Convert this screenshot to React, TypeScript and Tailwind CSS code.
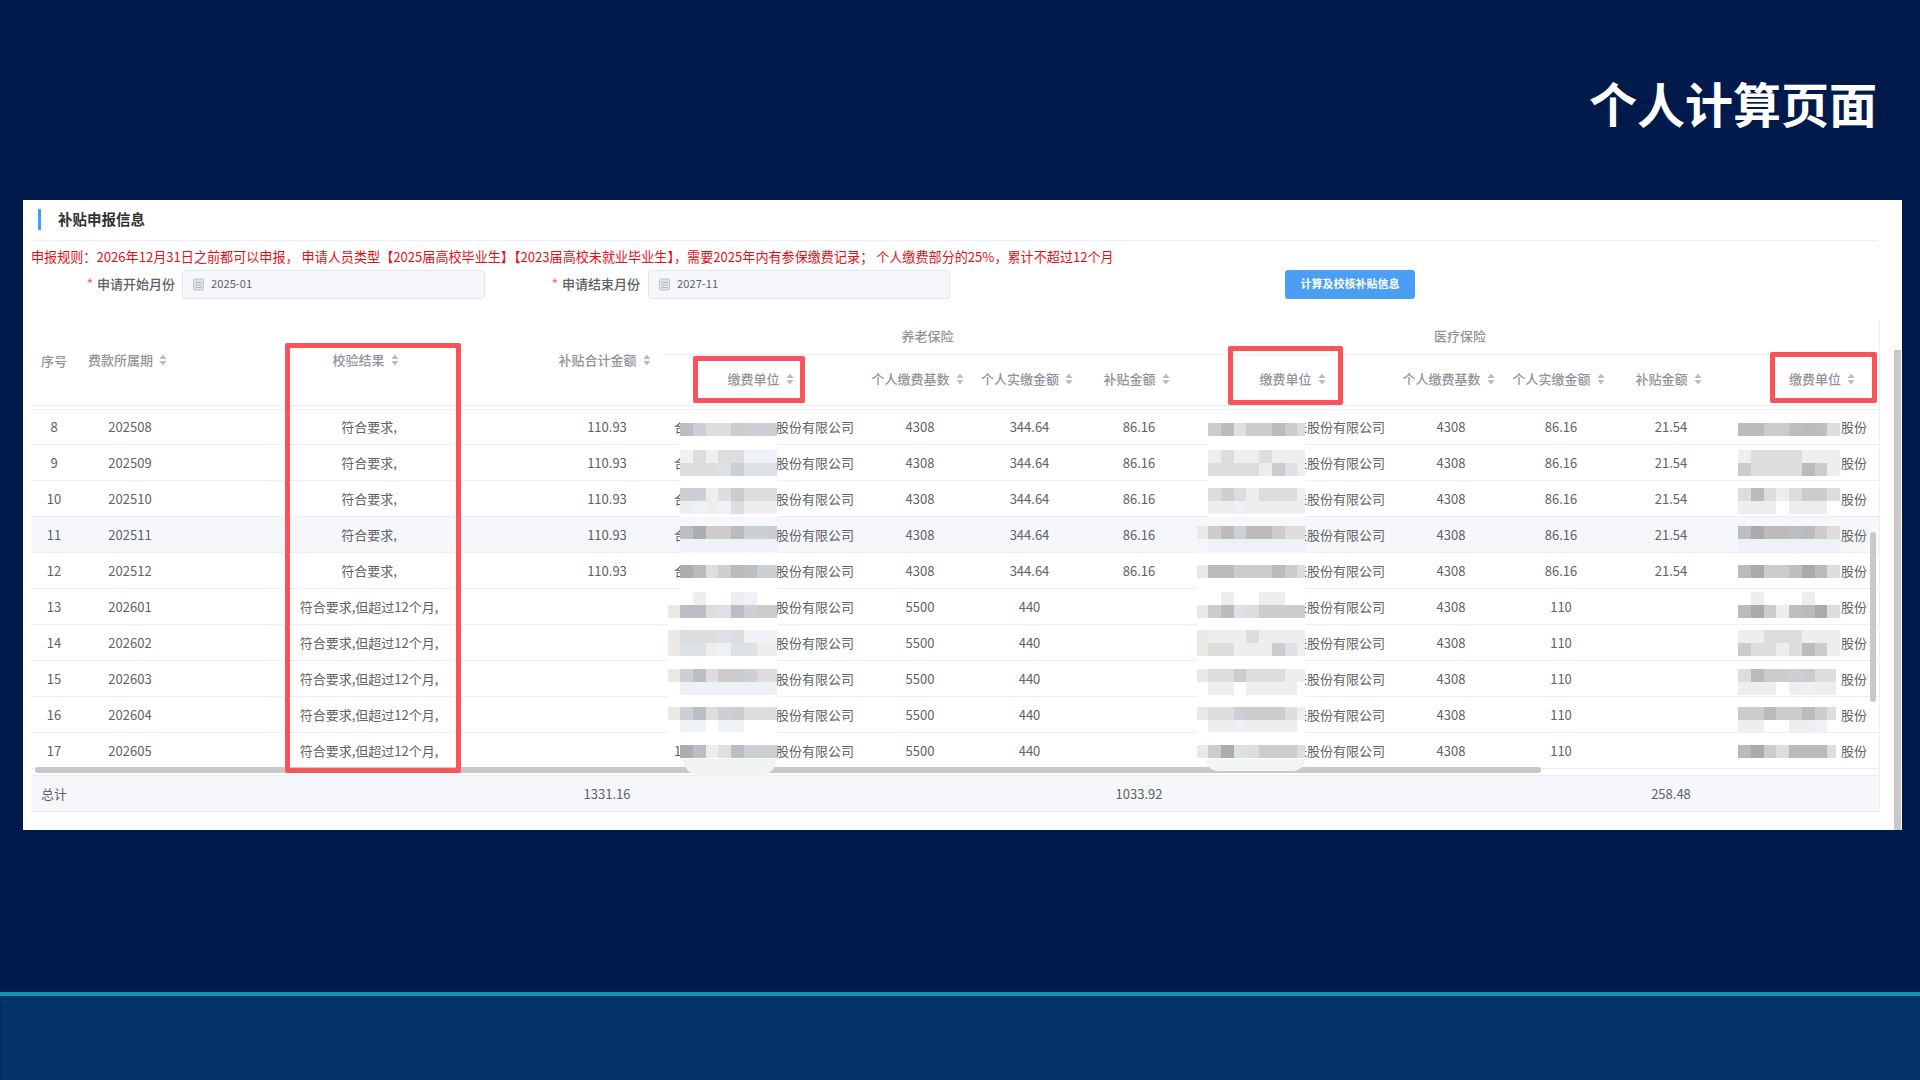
import React from "react";

const GRID =
  "grid grid-cols-[46px_106px_370px_108px_204px_110px_109px_110px_202px_110px_110px_110px_141px]";

function Sort() {
  return (
    <svg width="8" height="12" viewBox="0 0 8 12" className="ml-[6px] flex-none" fill="#b8bcc4">
      <path d="M4 0.5 L7.5 5 L0.5 5 Z" />
      <path d="M4 11.5 L0.5 7 L7.5 7 Z" />
    </svg>
  );
}

function Head({ label, className = "" }: { label: string; className?: string }) {
  return (
    <div className={`flex items-center justify-center text-[13px] font-medium text-[#909399] ${className}`}>
      <span className="whitespace-nowrap">{label}</span>
      <Sort />
    </div>
  );
}

function CalendarIcon() {
  return (
    <svg width="11" height="13" viewBox="0 0 11 13" className="flex-none" fill="none">
      <rect x="0.5" y="1" width="10" height="11" rx="1" fill="#dfe2e8" stroke="#c0c4cc" />
      <path d="M2.5 4.5h6M2.5 7h6M2.5 9.5h6" stroke="#b4b8c0" />
    </svg>
  );
}

function DateField({ value, className }: { value: string; className: string }) {
  return (
    <div className={`flex h-[29px] items-center rounded-[3px] border border-[#e4e7ed] bg-[#f5f7fa] pl-[10px] text-[11.2px] text-[#606266] ${className}`}>
      <CalendarIcon />
      <span className="ml-[7px] -translate-y-px">{value}</span>
    </div>
  );
}

type Strip = [string, string];
const F = "fff fff fff fff fff fff fff fff";
const L = "f5f7fa f5f7fa f5f7fa f5f7fa f5f7fa f5f7fa f5f7fa f5f7fa";

const COL1: Strip[] = [
  ["bbc ccd ddd ddd cbc cdd ccd ccd", F],
  ["eef ddd eee ddd ddd eef eef eef", "ddd ddd ddd dde ccd dde dde dde"],
  ["ccd ccd eee ddd ccc ddd ddd ddd", "eee eef eee eef ddd eee eee eee"],
  ["bbc aab ccc ccc bbb ccd ccd ccc", "eef eef eef eef eef eef eef eef"],
  ["aab bbb ddd ccd bbb bbc ccd ccd", F],
  ["fff eee fff fff eee eef fff fff", "bbc bbc ddd dde bbc ccd ccc ccc"],
  ["ddd ddd ddd dde ddd eef eef eef", "dde dde eee eef dde dde eee eee"],
  ["ccd bbc ddd ccc ccc ccd ddd ddd", "eef eef eef eef eef eef eef eef"],
  ["ccd bbc ddd ccd ccc ddd ddd ddd", "eef eef fff eef eef fff fff fff"],
  [F, "aab bbc eee dde bbc ccd ccd ccd"],
];
const COL2: Strip[] = [
  ["ccc bbb dde ccc ccc bbb ccc ddd", F],
  ["eee ddd eee eee ddd eee eee eee", "ddd ddd ddd ddd eee ccc dde eee"],
  ["ddd ccd ddd eee ddd ddd ddd eee", "eee eee eef eee eee eee eee eee"],
  ["ccc bbb ccd bbb bbb ccc ddd ddd", "eef eef eef eef eef eef eef eef"],
  ["bbb bbb ccc ccc ccc bbb ccc ddd", F],
  ["fff eee fff fff eee eee fff fff", "ccc bbb dde ddd ccc ccc ccc ccc"],
  ["eee eee eee ddd eee eee eee eee", "ddd ddd eee eee eee ccc dde eee"],
  ["ddd ddd ccc ddd ddd ddd eee eee", "eee eee fff eee eee eee eee fff"],
  ["ddd ddd ccd ccc ccc ccc ddd eee", "eee eee eef eee eee eee eee fff"],
  [F, "ccc aab dde ddd ccc ccc ccc ddd"],
];
const COL3: Strip[] = [
  ["bbb bbb ccc ccc bbc bbb bbc ddd", F],
  ["eee ddd ddd ddd ddd eee eee eee", "ccc ddd ddd ddd ddd bbb ccc eee"],
  ["ddd bbb ddd eee ddd ccc ccc ddd", "eee eee eee fff eee eee eee fff"],
  ["bbc aaa bbb bbb bbc bbb ccc ddd", "eef eef eef eef eef eef eef eef"],
  ["bbb aaa ccc ccc bbc aaa bbb ddd", F],
  ["fff eee fff fff fff eee fff fff", "bbb aaa ccc eee bbc bbb aaa ddd"],
  ["eee eee ddd ddd ddd eee eee eee", "ccc ddd ddd eee ddd bbb ccc eee"],
  ["ddd bbb ccc ccc ccd ccc ddd ddd", "eee eee eee fff eee eef eee eee"],
  ["ccc ccc bbb ccc ccc bbb ccc ddd", "eee eee fff fff eee eee eef fff"],
  [F, "bbb aaa ccc ddd bbb bbb bbb ddd"],
];
const OFFSETS = [13, 5, 7, 9, 12, 3, 5, 8, 10, -1];

// "bbc" style codes are a grey with a slight blue cast; keep the cast faint.
function tone(c: string) {
  if (c.length !== 3) return `#${c}`;
  const a = parseInt(c[0], 16) * 17;
  const cool = c[2] !== c[0];
  return cool ? `rgb(${a},${a + 4},${a + 9})` : `rgb(${a},${a},${a})`;
}

function StripRow({ colors, width }: { colors: string; width: number }) {
  const list = colors.split(" ");
  return (
    <div className="flex h-[13px] overflow-hidden" style={{ width }}>
      {list.map((c, i) => (
        <div key={i} className="h-full w-[12.75px] flex-none" style={{ background: tone(c) }} />
      ))}
    </div>
  );
}

function Mosaic({
  strip,
  row,
  left,
  width,
  washLeft,
  hi,
}: {
  strip: Strip;
  row: number;
  left: number;
  width: number;
  washLeft: number;
  hi: boolean;
}) {
  const top = OFFSETS[row];
  const hasLead = washLeft < left;
  const leadTop = top + (row === 5 || row === 9 ? 13 : 0);
  const leadH = row === 6 ? 26 : 13;
  return (
    <div
      className={`absolute top-0 -bottom-px ${hi ? "bg-[#f5f7fa]" : "bg-white"}`}
      style={{ left: washLeft, width: left + width - washLeft }}
    >
      {hasLead && (
        <div className="absolute left-0 bg-[#ece9e5]" style={{ top: leadTop, height: leadH, width: left - washLeft }} />
      )}
      <div className="absolute" style={{ top, left: left - washLeft }}>
        <StripRow colors={strip[0]} width={width} />
        <StripRow colors={hi && strip[1] === F ? L : strip[1]} width={width} />
      </div>
    </div>
  );
}

const ROWS = [
  [8, "202508"],
  [9, "202509"],
  [10, "202510"],
  [11, "202511"],
  [12, "202512"],
  [13, "202601"],
  [14, "202602"],
  [15, "202603"],
  [16, "202604"],
  [17, "202605"],
] as const;

function Num({ children }: { children?: React.ReactNode }) {
  return <div className="flex items-center justify-center">{children}</div>;
}

function Row({ index }: { index: number }) {
  const [no, period] = ROWS[index];
  const ok = index < 5;
  const hi = index === 3;
  const leak = index < 5 || index === 9;
  const lead = index >= 5 && index < 9;
  return (
    <div
      className={`${GRID} border-b border-[#ebeef5] text-[13px] text-[#606266] ${index === 0 ? "h-[35px]" : "h-[36px]"} ${hi ? "bg-[#f5f7fa]" : ""}`}
    >
      <Num>{no}</Num>
      <Num>{period}</Num>
      <div className="flex items-center justify-center pl-[2px]">
        {ok ? "符合要求," : "符合要求,但超过12个月,"}
      </div>
      <Num>{ok ? "110.93" : ""}</Num>

      <div className="relative flex items-center justify-end pr-[11px] whitespace-nowrap">
        股份有限公司
        {leak && <span className="absolute left-[13px]">{index === 9 ? "1" : "合"}</span>}
        <Mosaic strip={COL1[index]} row={index} left={19} width={97} washLeft={lead ? 7 : 19} hi={hi} />
        {index === 9 && (
          <div className="absolute left-[22px] top-[26px] z-10 h-[16px] w-[94px] rounded-b-[18px] bg-[#f2f2f2]" />
        )}
      </div>
      <Num>{ok ? "4308" : "5500"}</Num>
      <Num>{ok ? "344.64" : "440"}</Num>
      <Num>{ok ? "86.16" : ""}</Num>

      <div className="relative flex items-center justify-end pr-[11px] whitespace-nowrap">
        未股份有限公司
        <Mosaic strip={COL2[index]} row={index} left={14} width={97} washLeft={index > 2 ? 3 : 14} hi={hi} />
        {index === 9 && (
          <div className="absolute left-[12px] top-[26px] z-10 h-[12px] w-[99px] rounded-b-[18px] bg-[#f4f4f4]" />
        )}
      </div>
      <Num>4308</Num>
      <Num>{ok ? "86.16" : "110"}</Num>
      <Num>{ok ? "21.54" : ""}</Num>

      <div className="relative flex items-center overflow-hidden pl-[115px] whitespace-nowrap">
        股份有限公司
        <Mosaic strip={COL3[index]} row={index} left={12} width={index >= 7 ? 98 : 102} washLeft={12} hi={hi} />
      </div>
    </div>
  );
}

function RedBox({ className }: { className: string }) {
  return <div className={`absolute z-20 rounded-[2px] border-[5px] border-[#f9525a] ${className}`} />;
}

export default function App() {
  return (
    <div className="flex h-[1080px] w-[1920px] flex-col overflow-hidden bg-[#001a4b] font-['Noto_Sans_CJK_SC','Noto_Sans',sans-serif]">
      <div className="flex h-[200px] flex-none justify-end pr-[43px] pt-[68px]">
        <h1 className="text-[48px] leading-[68px] font-bold text-white">个人计算页面</h1>
      </div>

      <div className="relative ml-[23px] h-[630px] w-[1879px] flex-none bg-white">
        <div className="ml-[15px] flex h-[30px] items-start pt-[9px]">
          <div className="h-[21px] w-[3px] bg-[#409eff]" />
          <div className="ml-[17px] text-[14.5px] leading-[19px] font-bold text-[#303133]">补贴申报信息</div>
        </div>
        <div className="ml-[10px] mt-[10px] h-px w-[1845px] bg-[#ebeef5]" />
        <div className="ml-[8px] mt-[6px] h-[20px] whitespace-pre text-[13.1px] leading-[20px] text-[#e60f18]">
          申报规则：2026年12月31日之前都可以申报， 申请人员类型【2025届高校毕业生】【2023届高校未就业毕业生】，需要2025年内有参保缴费记录； 个人缴费部分的25%，累计不超过12个月
        </div>

        <div className="mt-[3px] flex h-[29px] items-center text-[13px] text-[#606266]">
          <div className="w-[152px] -translate-y-px text-right font-medium">
            <span className="mr-[4px] text-[#f56c6c]">*</span>申请开始月份
          </div>
          <DateField value="2025-01" className="ml-[7px] w-[303px]" />
          <div className="w-[155px] -translate-y-px text-right font-medium">
            <span className="mr-[4px] text-[#f56c6c]">*</span>申请结束月份
          </div>
          <DateField value="2027-11" className="ml-[8px] w-[302px]" />
          <button className="ml-[335px] flex h-[29px] w-[130px] items-center justify-center rounded-[3px] bg-[#4a9ff5] pb-[2px] text-[11px] font-bold text-white">
            计算及校核补贴信息
          </button>
        </div>

        <div className="ml-[8px] mt-[21px] w-[1849px] border-r border-[#ebeef5]">
          <div className={`${GRID} h-[86px] grid-rows-[35px_50px] border-b border-[#ebeef5]`}>
            <div className="row-span-2 flex -translate-y-[2px] items-center justify-center text-[13px] font-medium text-[#909399]">序号</div>
            <Head label="费款所属期" className="row-span-2 -translate-y-[3px] pr-[5px]" />
            <Head label="校验结果" className="row-span-2 -translate-y-[3px] pr-[5px]" />
            <Head label="补贴合计金额" className="row-span-2 -translate-y-[3px] pr-[5px]" />
            <div className="col-span-4 flex items-center justify-center border-b border-[#ebeef5] pb-[2px] text-[13px] font-medium text-[#909399]">养老保险</div>
            <div className="col-span-4 flex items-center justify-center border-b border-[#ebeef5] pb-[2px] text-[13px] font-medium text-[#909399]">医疗保险</div>
            <div className="border-b border-[#ebeef5]" />
            <Head label="缴费单位" className="-translate-y-px pr-[5px]" />
            <Head label="个人缴费基数" className="-translate-y-px pr-[5px]" />
            <Head label="个人实缴金额" className="-translate-y-px pr-[5px]" />
            <Head label="补贴金额" className="-translate-y-px pr-[5px]" />
            <Head label="缴费单位" className="-translate-y-px pr-[5px]" />
            <Head label="个人缴费基数" className="-translate-y-px pr-[5px]" />
            <Head label="个人实缴金额" className="-translate-y-px pr-[5px]" />
            <Head label="补贴金额" className="-translate-y-px pr-[5px]" />
            <Head label="缴费单位" className="-translate-y-px justify-end pr-[12px]" />
          </div>
          <div className="h-[4px] border-b border-[#ebeef5]" />

          <div>
            {ROWS.map((_, i) => (
              <Row key={i} index={i} />
            ))}
          </div>

          <div className="relative h-[6px]">
            <div className="absolute -top-[2px] left-[4px] h-[6px] w-[1506px] rounded-full bg-[#c8c8c8]" />
          </div>
          <div className={`${GRID} h-[37px] items-center border-y border-[#ebeef5] bg-[#f5f7fa] text-[13px] text-[#606266]`}>
            <div className="text-center">总计</div>
            <div />
            <div />
            <div className="text-center">1331.16</div>
            <div />
            <div />
            <div />
            <div className="text-center">1033.92</div>
            <div />
            <div />
            <div />
            <div className="text-center">258.48</div>
            <div />
          </div>
        </div>

        <div className="absolute left-[1847px] top-[332px] z-10 h-[170px] w-[6px] rounded-full bg-[#c9c9c9]" />
        <div className="absolute bottom-0 left-[1871px] top-[150px] w-[7px] bg-[#c8c8c8]" />

        <RedBox className="left-[262px] top-[143px] h-[430px] w-[176px]" />
        <RedBox className="left-[670px] top-[156px] h-[47px] w-[112px]" />
        <RedBox className="left-[1205px] top-[146px] h-[59px] w-[115px]" />
        <RedBox className="left-[1747px] top-[152px] h-[51px] w-[107px]" />
      </div>

      <div className="flex-1" />
      <div className="h-[4px] flex-none bg-[#1295ad]" />
      <div className="h-[84px] flex-none border-l border-[#022a62] bg-[#04336a]" />
    </div>
  );
}
